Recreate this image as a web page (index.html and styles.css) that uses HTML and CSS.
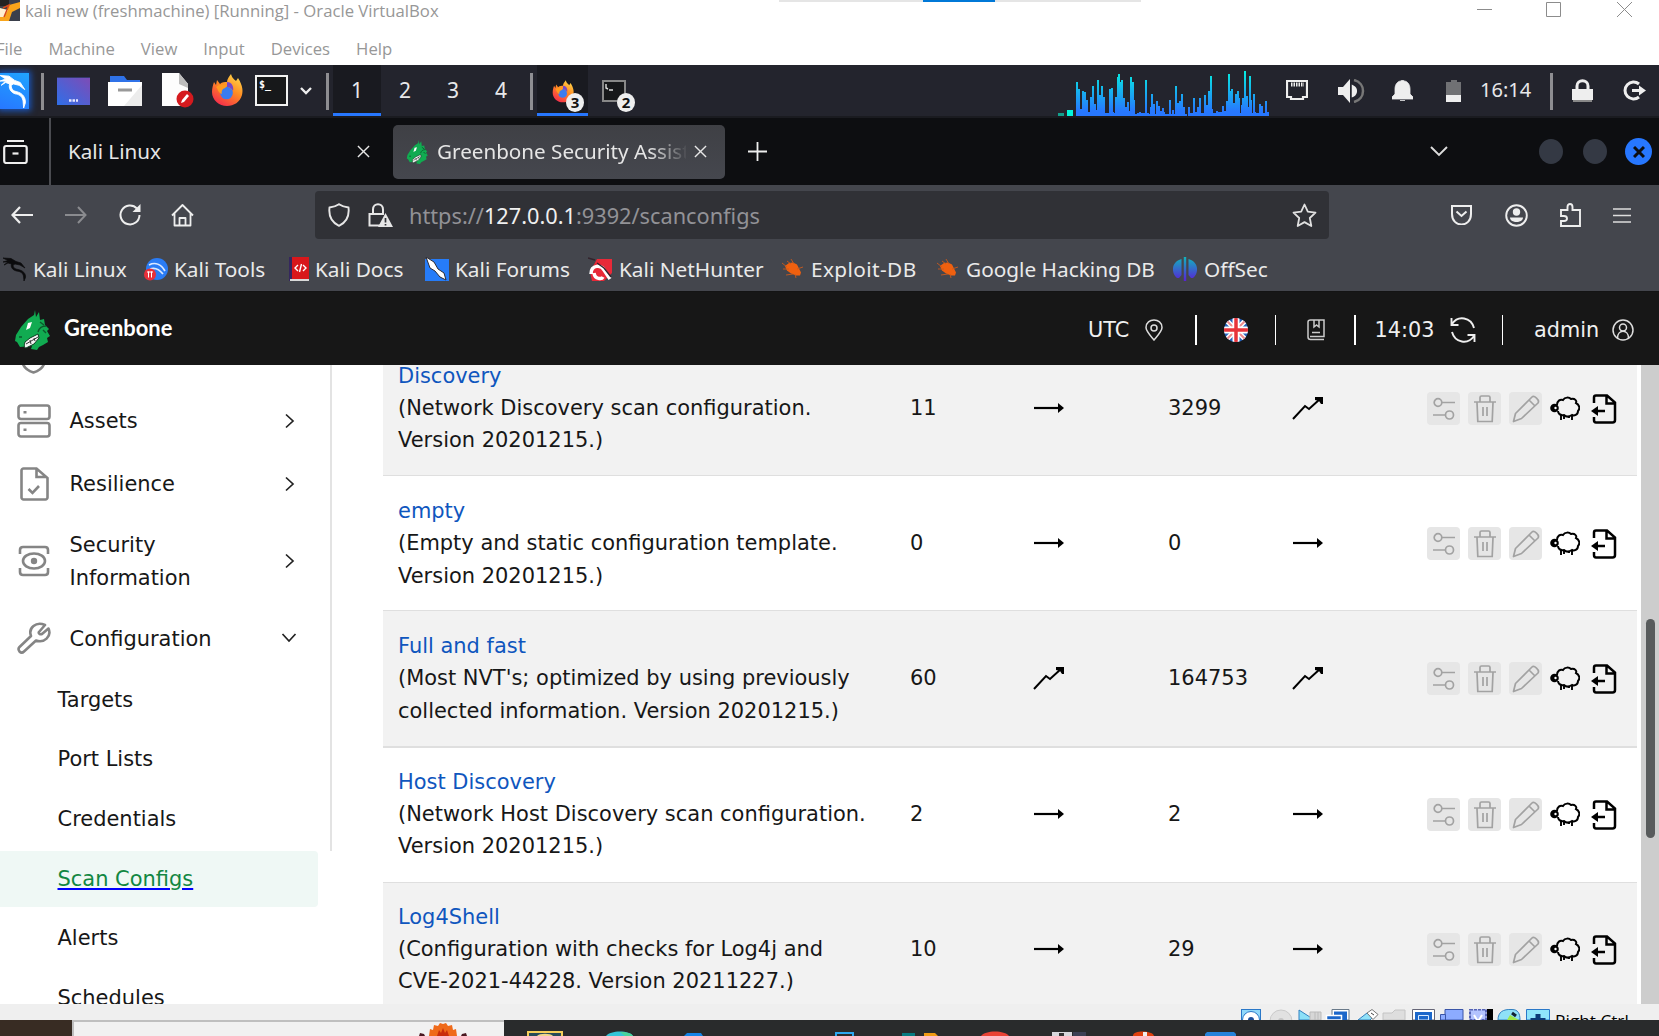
FILE: index.html
```html
<!DOCTYPE html>
<html lang="en">
<head>
<meta charset="utf-8">
<title>kali new (freshmachine) [Running] - Oracle VirtualBox</title>
<link rel="stylesheet" href="styles.css">
</head>
<body>
<svg class="defs" width="0" height="0">
  <defs>
    <linearGradient id="g-desk" x1="0" y1="1" x2="1" y2="0"><stop offset="0" stop-color="#2f6fe8"/><stop offset="1" stop-color="#7f4bb5"/></linearGradient>
    <linearGradient id="g-fox" x1=".8" y1="0" x2=".2" y2="1"><stop offset="0" stop-color="#ffd84a"/><stop offset=".45" stop-color="#ff8a22"/><stop offset="1" stop-color="#f4264f"/></linearGradient>
    <linearGradient id="g-cpu" gradientUnits="userSpaceOnUse" x1="0" y1="0" x2="0" y2="46"><stop offset="0" stop-color="#05f0dd"/><stop offset=".9" stop-color="#2777ff"/></linearGradient>
    <linearGradient id="g-off" gradientUnits="userSpaceOnUse" x1="0" y1="0" x2="0" y2="24"><stop offset="0" stop-color="#10b5bd"/><stop offset="1" stop-color="#5a1fd8"/></linearGradient>
  </defs>
  <symbol id="firefox" viewBox="0 0 32 34">
    <path d="M3 8l2 3 1-5 3 4c2-2 5-2 7-2 0-3 2-5 4-8 1 4 3 5 5 7l2-3c5 8 5 13 4 17-2 7-8 11-15 11C8 32 1 26 1 18c0-4 1-7 2-10z" fill="url(#g-fox)"/>
    <circle cx="15.5" cy="19" r="6.3" fill="#3a7cf0"/>
    <path d="M5 13c3-3 7-3 11-2-1 2-1 3-4 4-1 1-2 4-1 5-4-1-4-5-6-7z" fill="#ff9a20"/>
    <path d="M16 8c5 0 7 5 6 9-1-2-3-4-6-4z" fill="#7547c9"/>
  </symbol>
  <symbol id="dragon" viewBox="0 0 24 24">
    <path d="M0 1l8 .5 5 3 5 1.500 4 5-5-3-5-1-2 1c0 3 2 4 5 4.500 5 1 8 4 7.500 8L21 24l-.5-5c-1-4-4-4.500-7-5-4-1-6-4-5-7L5 6 1 8l4-3-5 0 5-1.500z" fill="currentColor" stroke="currentColor" stroke-width=".7" stroke-linejoin="round"/>
  </symbol>
  <symbol id="gb" viewBox="0 0 40 40">
    <path d="M23 0l1 7 3-5 1 8 4-1 1 6 4 4-2 2 3 5-3 2 1 4-5 3-4 2-2 3-6-1 1-3-12 1-3-5-2-1 1-6 5-8 7-8 6-4z" fill="#11ab51"/>
    <path d="M13 32l5-4 8-4 1 4-5 6-8 4c-2 0-2-3-1-6z" fill="#f4f4f4" stroke="#0b3d20" stroke-width="1"/>
    <path d="M14 34l12-7M18 30l1 4M22 28l1 3" stroke="#333" stroke-width="1"/>
    <path d="M16 13l4-1-2 6-4 2z" fill="#fff"/>
    <path d="M26 22c1-4 4-6 8-6M28 12l4 3M7 27h3M31 20l3 3" fill="none" stroke="#0b5a2c" stroke-width="1.4"/>
  </symbol>
  <symbol id="x" viewBox="0 0 14 14"><path d="M1 1l12 12M13 1L1 13" fill="none" stroke="currentColor" stroke-width="1.5"/></symbol>
  <symbol id="bug" viewBox="0 0 22 20">
    <path d="M3 7l4-3 4-.5 4 2 2 4 2 4-1 3-4 0-5-2-4-3z" fill="#f0600f"/>
    <path d="M0 4l5 4M1 10l6 0M4 16l7-1M9 0l3 5M14 19l-1-4M21 8l-6 2M5 2l4 3" stroke="#c95a1d" stroke-width=".9"/>
  </symbol>
  <symbol id="right" viewBox="0 0 32 20"><path d="M1 10h24" stroke="#000" stroke-width="2.200"/><path d="M25 5l6 5-6 5z" fill="#000"/></symbol>
  <symbol id="up" viewBox="0 0 32 24"><path d="M1 23l12-13 4 3L28 3" fill="none" stroke="#000" stroke-width="2"/><path d="M23 1h8v7h-2l-2-3-4-1z" fill="#000"/></symbol>
  <symbol id="conf" viewBox="0 0 24 26"><g fill="none" stroke="#a2a2a2" stroke-width="1.7"><circle cx="6" cy="6.500" r="3.800"/><path d="M10 6.500h13M1 19h12"/><circle cx="17.500" cy="19" r="4"/></g></symbol>
  <symbol id="trash" viewBox="0 0 24 28"><path d="M1 7h22M4 7.500l.8 19h14.400l.8-19M7 7V2.500c0-1 .5-1.500 1.500-1.500h7c1 0 1.500.5 1.500 1.500V7M10 12v9M14 12v9" fill="none" stroke="#a2a2a2" stroke-width="1.7"/></symbol>
  <symbol id="pen" viewBox="0 0 28 28"><path d="M1.500 26.500l2-8L20 2c2-2 8 3 6 6L9.500 23.500zM17 5l6 6" fill="none" stroke="#a2a2a2" stroke-width="1.700" stroke-linejoin="round"/></symbol>
  <symbol id="sheep" viewBox="0 0 30 26">
    <path d="M7 9C7 5 10 3 13 4c2-3 6-3 8-1 4-1 6 2 5 4 4 2 4 6 2 8 0 4-4 5-6 4-3 2-6 2-8 0-4 1-6-2-6-4" fill="none" stroke="#000" stroke-width="2"/>
    <path d="M11 19v5M14 20v3M22 19v5M19 20v2" stroke="#000" stroke-width="1.900"/>
    <circle cx="4.500" cy="12" r="4.300" fill="#000"/><circle cx="5.500" cy="12" r="1.200" fill="#fff"/>
  </symbol>
  <symbol id="export" viewBox="0 0 26 30"><path d="M3 9V3.500C3 2 4 1.500 5 1.500h11l8 7V26c0 1.500-1 2.500-2.500 2.500H5c-1.500 0-2-1-2-2.500v-3M15.500 2v7.500H24" fill="none" stroke="#000" stroke-width="2.500"/><path d="M5 17h9" stroke="#000" stroke-width="2.500"/><path d="M7 12v10l-7-5z" fill="#000"/></symbol>
  <symbol id="chev" viewBox="0 0 10 16"><path d="M1 1.500L8 8l-7 6.500" fill="none" stroke="#222" stroke-width="1.700"/></symbol>
</svg>

<header class="window">
  <div class="snapbar"><i></i></div>
  <div class="titlebar">
    <svg class="vbox" width="20" height="21" viewBox="0 0 20 21"><path d="M0 0h20v21H0z" fill="#3a3f4b"/><path d="M0 0h9v6H0z" fill="#222"/><path d="M20 2v6l-8 4-3 9H0v-5l5-1 4-10z" fill="#f9a51b"/><path d="M0 8l8 2-4 7H0z" fill="#fff0d0"/><path d="M3 8l6-3-5 12" fill="none" stroke="#d64a1a" stroke-width="1.500"/></svg>
    <span class="title">kali new (freshmachine) [Running] - Oracle VirtualBox</span>
    <svg class="winctl" width="156" height="17" viewBox="0 0 156 17"><path d="M0 9.500h15M69.500 2.500h14v14h-14zM140 2l15 15M155 2l-15 15" fill="none" stroke="#8c8c8c"/></svg>
  </div>
  <nav class="menubar"><span>File</span><span>Machine</span><span>View</span><span>Input</span><span>Devices</span><span>Help</span></nav>
</header>

<section class="panel">
  <div class="kali"><svg width="27" height="34" viewBox="0 0 24 24" preserveAspectRatio="none"><use href="#dragon"/></svg></div>
  <i class="sep"></i>
  <div class="launchers">
    <svg width="33" height="28" viewBox="0 0 33 28"><path d="M0 0h33v28H0z" fill="url(#g-desk)"/><path d="M0 0h33v1H0z" fill="#343a6b"/><path d="M12 23.500h9" stroke="#e8e8ff" stroke-width="2.500" stroke-dasharray="2.500 1"/></svg>
    <svg width="34" height="31" viewBox="0 0 34 31"><path d="M2 9V1h14l3 4h13v5z" fill="#2f72e8"/><path d="M0 7h34v24H0z" fill="#fff"/><path d="M34 10v21H16z" fill="#ececec"/><path d="M10 15h14" stroke="#999" stroke-width="3"/></svg>
    <svg width="32" height="35" viewBox="0 0 32 35"><path d="M0 0h17l9 11v22H0z" fill="#fdfdfd"/><path d="M17 0l9 11v4l-9-4z" fill="#bdbdbd"/><circle cx="23" cy="26" r="8.500" fill="#d51a1e"/><path d="M19 30l3-1 5-6-2-2-5 6z" fill="#fff"/></svg>
    <svg width="32" height="34"><use href="#firefox"/></svg>
    <svg width="33" height="31" viewBox="0 0 33 31"><path d="M1 1h31v29H1z" fill="#17181a" stroke="#f2f2f2" stroke-width="2"/><text x="4" y="13" class="term">$_</text></svg>
    <svg width="12" height="8" viewBox="0 0 12 8"><path d="M1 1l5 5 5-5" fill="none" stroke="#eee" stroke-width="2.300"/></svg>
  </div>
  <i class="sep"></i>
  <div class="spaces"><span class="on">1</span><span>2</span><span>3</span><span>4</span></div>
  <i class="sep"></i>
  <div class="task on"><svg width="22" height="24"><use href="#firefox"/></svg><b>3</b></div>
  <div class="task second"><svg width="24" height="22" viewBox="0 0 24 22"><path d="M1 1h22v20H1z" fill="#17181a" stroke="#888" stroke-width="2"/><path d="M4 4v4l2 1M7 10h4" fill="none" stroke="#ddd" stroke-width="1.400"/></svg><b>2</b></div>
  <svg class="cpu" width="211" height="46" viewBox="0 0 211 46"><path d="M0 43h6v3H0z" fill="#12a08d"/><path d="M9 40h6v6H9z" fill="#05f5dc"/><path id="cpu-bars" fill="url(#g-cpu)"/></svg>
  <div class="tray">
    <svg width="22" height="21" viewBox="0 0 22 21"><path d="M1 1h20v16h-4v2H5v-2H1z" fill="none" stroke="#eee" stroke-width="2.200"/><path d="M5 4.500h13" stroke="#eee" stroke-width="4" stroke-dasharray="1.500 1"/></svg>
    <svg width="27" height="24" viewBox="0 0 27 24"><path d="M0 8h5l7-8v24l-7-8H0z" fill="#eee"/><path d="M15 7.500a5 5 0 010 9z" fill="#eee" stroke="#eee" stroke-width="2.500"/><path d="M16 1c12 3 12 19 0 22" fill="none" stroke="#777" stroke-width="2.500"/></svg>
    <svg width="21" height="22" viewBox="0 0 21 22"><path d="M0 19v-2l3-3V9c0-5 3-8 6-8 0-1 3-1 3 0 3 0 6 3 6 8v5l3 3v2zM8 20.500h5" fill="#eee" stroke="#eee" stroke-width=".8"/></svg>
    <svg width="15" height="22" viewBox="0 0 15 22"><path d="M0 2h5V0h6v2h4v13H0z" fill="#707174"/><path d="M0 15h15v7H0z" fill="#eee"/></svg>
    <span class="clock">16:14</span>
    <i class="sep"></i>
    <svg width="21" height="24" viewBox="0 0 21 24"><path d="M5 11V7c0-7 11-7 11 0v4" fill="none" stroke="#eee" stroke-width="3"/><path d="M0 10h21v11H0z" fill="#eee"/><path d="M1 21h19v2H1z" fill="#888"/></svg>
    <svg width="23" height="21" viewBox="0 0 23 21"><path d="M16 4a8.500 8.500 0 100 13" fill="none" stroke="#eee" stroke-width="3"/><path d="M9 10.500h9" stroke="#eee" stroke-width="3"/><path d="M16 5.500l7 5-7 5z" fill="#eee"/></svg>
  </div>
</section>

<section class="tabs">
  <svg class="recent" width="25" height="24" viewBox="0 0 25 24"><path d="M4 1h17" stroke="#eee" stroke-width="2"/><rect x="1.200" y="6" width="22.500" height="17" rx="2" fill="none" stroke="#eee" stroke-width="2.200"/><path d="M9.500 13.500h6" stroke="#eee" stroke-width="2.200"/></svg>
  <div class="tab first"><span>Kali Linux</span><svg width="13" height="13"><use href="#x"/></svg></div>
  <div class="tab active"><svg width="24" height="24"><use href="#gb"/></svg><span class="fade">Greenbone Security Assistant</span><svg width="13" height="13"><use href="#x"/></svg></div>
  <svg class="plus" width="19" height="19" viewBox="0 0 19 19"><path d="M9.500 0v19M0 9.500h19" stroke="#eee" stroke-width="1.800"/></svg>
  <div class="tabend">
    <svg width="18" height="11" viewBox="0 0 18 11"><path d="M1 1l8 8 8-8" fill="none" stroke="#ddd" stroke-width="1.900"/></svg>
    <i class="dot"></i><i class="dot"></i>
    <i class="dot close"><svg width="12" height="12" viewBox="0 0 12 12"><path d="M1 1l10 10M11 1L1 11" stroke="#0d0e11" stroke-width="3"/></svg></i>
  </div>
</section>

<section class="toolbar">
  <div class="nav">
    <svg width="22" height="18" viewBox="0 0 22 18"><path d="M9 1L1.500 9 9 17M1.500 9H22" fill="none" stroke="#eee" stroke-width="2.200"/></svg>
    <svg width="22" height="18" viewBox="0 0 22 18"><path d="M13 1l7.500 8-7.500 8M20.500 9H0" fill="none" stroke="#8a8b8f" stroke-width="2"/></svg>
    <svg width="22" height="22" viewBox="0 0 22 22"><path d="M18 4.500A9.500 9.500 0 1020.500 11" fill="none" stroke="#eee" stroke-width="2"/><path d="M21.500 0v8h-8z" fill="#eee"/></svg>
    <svg width="23" height="23" viewBox="0 0 23 23"><path d="M3.500 9v12.500h16V9M1 11.500L11.500 1 22 11.500M8.500 21v-7h6v7" fill="none" stroke="#eee" stroke-width="1.800" stroke-linejoin="round"/></svg>
  </div>
  <div class="url">
    <svg width="22" height="24" viewBox="0 0 22 24"><path d="M11 1.200c3 2 6 2.800 9.500 3.300C21.500 13 18 19.500 11 22.800 4 19.500.5 13 1.500 4.500 5 4 8 3.200 11 1.200z" fill="none" stroke="#e6e6e6" stroke-width="1.900"/></svg>
    <svg width="25" height="24" viewBox="0 0 25 24"><path d="M5 11V6.500c0-7 10-7 10 0V11M14 22.500H1.500V11H16" fill="none" stroke="#e6e6e6" stroke-width="2"/><path d="M17.500 10L25 24H10z" fill="#e6e6e6"/><path d="M17.500 15v4.500M17.500 21v1.500" stroke="#303136" stroke-width="1.700"/></svg>
    <span class="addr">https://<em>127.0.0.1</em>:9392/scanconfigs</span>
    <svg width="25" height="25" viewBox="0 0 25 25"><path d="M12.500 1.500l3.300 7.200 7.700 1-5.700 5.300 1.500 8-6.800-3.900L5.700 23l1.500-8-5.700-5.300 7.700-1z" fill="none" stroke="#e0e0e0" stroke-width="1.800" stroke-linejoin="round"/></svg>
  </div>
  <div class="actions">
    <svg width="21" height="20" viewBox="0 0 21 20"><path d="M1 1h19v8c0 14-19 14-19 0z" fill="none" stroke="#eee" stroke-width="2"/><path d="M5.500 6.500l5 4.500 5-4.500" fill="none" stroke="#eee" stroke-width="2"/></svg>
    <svg width="23" height="23" viewBox="0 0 23 23"><circle cx="11.500" cy="11.500" r="10.300" fill="none" stroke="#eee" stroke-width="1.900"/><circle cx="11.500" cy="8" r="3.700" fill="#eee"/><path d="M5 13.500h13c0 6-13 6-13 0z" fill="#eee"/></svg>
    <svg width="21" height="24" viewBox="0 0 21 24"><path d="M1 10V7h6.500V4c0-4 5-4 5 0v3H20v16H1v-5h3c4 0 4-5 0-5H1z" fill="none" stroke="#eee" stroke-width="1.900"/></svg>
    <svg width="18" height="15" viewBox="0 0 18 15"><path d="M0 1h18M0 7.500h18M0 14h18" stroke="#ddd" stroke-width="1.500"/></svg>
  </div>
</section>

<section class="bookmarks">
  <span class="b1"><svg class="dk" width="24" height="24"><use href="#dragon"/></svg>Kali Linux</span>
  <span class="b2"><svg width="24" height="24" viewBox="0 0 24 24"><circle cx="13" cy="12" r="11" fill="#2a7cf5"/><path d="M5 8c6-3 12-1 16 6M6 12c5-2 9 0 13 5" fill="none" stroke="#dbe9ff" stroke-width="1.700"/><circle cx="6" cy="17.500" r="6" fill="#e8303a"/><path d="M4.500 14.500v6M7.500 14.500v6M3 15h6" stroke="#fff"/></svg>Kali Tools</span>
  <span class="b3"><svg width="20" height="24" viewBox="0 0 20 24"><path d="M0 0h4v24H0z" fill="#35275e"/><path d="M3 0h17v22H3z" fill="#d8171b"/><path d="M1 22h19v2H1z" fill="#d9d9d9"/><path d="M9 8l-3 3 3 3M14 8l3 3-3 3M12.500 7l-2 8" fill="none" stroke="#fff" stroke-width="1.400"/></svg>Kali Docs</span>
  <span class="b4"><svg width="24" height="24" viewBox="0 0 24 24"><path d="M0 2h24v22H0z" fill="#267cf8"/><path d="M1 0l8 5 4 7 6 4 2 7-6-3-5-6-5-3z" fill="#fff" stroke="#2c2c36" stroke-width="1"/></svg>Kali Forums</span>
  <span class="b5"><svg width="24" height="24" viewBox="0 0 24 24"><path d="M9 2h15v14l-8 8H4L2 15z" fill="#e82938"/><path d="M3 17c0-10 11-9 13-4l6 9M6 16c1 7 8 6 9 4" fill="none" stroke="#fff" stroke-width="3.500"/><path d="M0 1l7 2M9 6l7 5 7 9" fill="none" stroke="#33232c" stroke-width="1.400"/></svg>Kali NetHunter</span>
  <span class="b6"><svg width="22" height="20"><use href="#bug"/></svg>Exploit-DB</span>
  <span class="b7"><svg width="22" height="20"><use href="#bug"/></svg>Google Hacking DB</span>
  <span class="b8"><svg width="24" height="24" viewBox="0 0 24 24"><path d="M8.500 2C-2 5-2 16 4 21h2l2.500-3zM15.500 2C26 5 26 16 20 21h-2l-2.500-3zM10.800 0h2.400v24h-2.400z" fill="url(#g-off)"/></svg>OffSec</span>
</section>

<section class="gbhead">
  <svg width="40" height="40"><use href="#gb"/></svg><strong>Greenbone</strong>
  <div class="gbtools">
    <span class="utc">UTC</span>
    <svg width="18" height="22" viewBox="0 0 18 22"><path d="M9 21C4 15 1 12 1 8.500c0-10 16-10 16 0C17 12 14 15 9 21z" fill="none" stroke="#ddd" stroke-width="1.500"/><circle cx="9" cy="9" r="3" fill="none" stroke="#ddd" stroke-width="1.500"/></svg>
    <i></i>
    <svg width="24" height="24" viewBox="0 0 24 24"><clipPath id="fc"><circle cx="12" cy="12" r="12"/></clipPath><g clip-path="url(#fc)"><path d="M0 0h24v24H0z" fill="#2463bd"/><path d="M0 0l24 24M24 0L0 24" stroke="#fff" stroke-width="5"/><path d="M0 0l24 24M24 0L0 24" stroke="#ee8b8d" stroke-width="2"/><path d="M12 0v24M0 12h24" stroke="#fff" stroke-width="7"/><path d="M12 0v24M0 12h24" stroke="#e8333a" stroke-width="3.500"/></g></svg>
    <i></i>
    <svg width="18" height="22" viewBox="0 0 18 22"><path d="M3 17.500h14V1H3.500C2 1 1 2 1 3v15c0 1.500 1 2.500 2.500 2.500H17M7 1v7l2.500-2L12 8V1M5 13.500h8" fill="none" stroke="#ccc" stroke-width="1.500"/></svg>
    <i></i>
    <span class="time">14:03</span>
    <svg width="26" height="26" viewBox="0 0 26 26"><path d="M2 7c6-9 19-7 22 4M24 19C18 28 5 26 2 15M1.500 1v7h7M24.500 25v-7h-7" fill="none" stroke="#eee" stroke-width="1.900"/></svg>
    <i></i>
    <span class="admin">admin</span>
    <svg width="22" height="22" viewBox="0 0 22 22"><g fill="none" stroke="#ddd" stroke-width="1.500"><circle cx="11" cy="11" r="10"/><circle cx="11" cy="8.500" r="3.500"/><path d="M5.500 19c0-9 11-9 11 0"/></g></svg>
  </div>
</section>

<main class="body">
  <aside class="side">
    <div class="clip"><svg width="33" height="33" viewBox="0 0 33 33"><path d="M16.500 1.500l12 4v10c0 9-5 14-12 16-7-2-12-7-12-16v-10z" fill="none" stroke="#858585" stroke-width="2.600"/></svg></div>
    <div class="item"><svg width="34" height="34" viewBox="0 0 34 34"><g fill="none" stroke="#858585" stroke-width="2.600"><rect x="1.500" y="1.500" width="31" height="13.500" rx="2.500"/><rect x="1.500" y="19" width="31" height="13.500" rx="2.500"/></g><path d="M6.500 8.300h3M6.500 25.800h3" stroke="#858585" stroke-width="2.600"/></svg><span>Assets</span><svg class="ch" width="10" height="16"><use href="#chev"/></svg></div>
    <div class="item"><svg width="34" height="34" viewBox="0 0 34 34"><g fill="none" stroke="#858585" stroke-width="2.600"><path d="M19.500 1.500H6.500c-1 0-2 1-2 2v27c0 1 1 2 2 2h22c1 0 2-1 2-2V11zM19.500 1.500V10h10.500"/><path d="M11.500 22l4 4 6.500-7"/></g></svg><span>Resilience</span><svg class="ch" width="10" height="16"><use href="#chev"/></svg></div>
    <div class="item tall"><svg width="34" height="34" viewBox="0 0 34 34"><g fill="none" stroke="#858585" stroke-width="2.600"><path d="M3 10V6c0-2 1-3 3-3h22c2 0 3 1 3 3v4M3 24v4c0 2 1 3 3 3h22c2 0 3-1 3-3v-4"/><ellipse cx="17" cy="17" rx="11" ry="7.500"/></g><circle cx="17" cy="17" r="3.200" fill="#858585"/></svg><span>Security<br>Information</span><svg class="ch" width="10" height="16"><use href="#chev"/></svg></div>
    <div class="item"><svg width="34" height="34" viewBox="0 0 34 34"><path d="M22 11l6-7c-9-4-17 3-14 11L2.500 26c-2 2-1 3 0 4.500 1.500 1.500 3 1.500 4.500 0L19 19.500c8 3 16-4 12.500-12L25 13c-2 1-4-1-3-2z" fill="none" stroke="#858585" stroke-width="2.600" stroke-linejoin="round"/></svg><span>Configuration</span><svg class="ch down" width="10" height="16"><use href="#chev"/></svg></div>
    <a class="sub">Targets</a><a class="sub">Port Lists</a><a class="sub">Credentials</a><a class="sub cur"><u>Scan Configs</u></a><a class="sub">Alerts</a><a class="sub">Schedules</a>
  </aside>
  <div class="rule"></div>
  <div class="table">
    <div class="row"><div><a>Discovery</a><br>(Network Discovery scan configuration.<br>Version 20201215.)</div><span>11</span><svg width="32" height="20"><use href="#right"/></svg><span>3299</span><svg width="32" height="24"><use href="#up"/></svg><div class="acts"><b><svg width="24" height="26"><use href="#conf"/></svg></b><b><svg width="24" height="28"><use href="#trash"/></svg></b><b><svg width="28" height="28"><use href="#pen"/></svg></b><svg width="30" height="26"><use href="#sheep"/></svg><svg width="26" height="30"><use href="#export"/></svg></div></div>
    <div class="row"><div><a>empty</a><br>(Empty and static configuration template.<br>Version 20201215.)</div><span>0</span><svg width="32" height="20"><use href="#right"/></svg><span>0</span><svg width="32" height="20"><use href="#right"/></svg><div class="acts"><b><svg width="24" height="26"><use href="#conf"/></svg></b><b><svg width="24" height="28"><use href="#trash"/></svg></b><b><svg width="28" height="28"><use href="#pen"/></svg></b><svg width="30" height="26"><use href="#sheep"/></svg><svg width="26" height="30"><use href="#export"/></svg></div></div>
    <div class="row thick"><div><a>Full and fast</a><br>(Most NVT's; optimized by using previously<br>collected information. Version 20201215.)</div><span>60</span><svg width="32" height="24"><use href="#up"/></svg><span>164753</span><svg width="32" height="24"><use href="#up"/></svg><div class="acts"><b><svg width="24" height="26"><use href="#conf"/></svg></b><b><svg width="24" height="28"><use href="#trash"/></svg></b><b><svg width="28" height="28"><use href="#pen"/></svg></b><svg width="30" height="26"><use href="#sheep"/></svg><svg width="26" height="30"><use href="#export"/></svg></div></div>
    <div class="row after"><div><a>Host Discovery</a><br>(Network Host Discovery scan configuration.<br>Version 20201215.)</div><span>2</span><svg width="32" height="20"><use href="#right"/></svg><span>2</span><svg width="32" height="20"><use href="#right"/></svg><div class="acts"><b><svg width="24" height="26"><use href="#conf"/></svg></b><b><svg width="24" height="28"><use href="#trash"/></svg></b><b><svg width="28" height="28"><use href="#pen"/></svg></b><svg width="30" height="26"><use href="#sheep"/></svg><svg width="26" height="30"><use href="#export"/></svg></div></div>
    <div class="row after"><div><a>Log4Shell</a><br>(Configuration with checks for Log4j and<br>CVE-2021-44228. Version 20211227.)</div><span>10</span><svg width="32" height="20"><use href="#right"/></svg><span>29</span><svg width="32" height="20"><use href="#right"/></svg><div class="acts"><b><svg width="24" height="26"><use href="#conf"/></svg></b><b><svg width="24" height="28"><use href="#trash"/></svg></b><b><svg width="28" height="28"><use href="#pen"/></svg></b><svg width="30" height="26"><use href="#sheep"/></svg><svg width="26" height="30"><use href="#export"/></svg></div></div>
  </div>
  <div class="scroll"><i></i></div>
</main>

<footer class="status">
  <svg width="310" height="11" viewBox="0 0 310 11">
    <rect x=".5" y=".5" width="19" height="20" fill="#8fd8fa" stroke="#2a78c8"/><circle cx="10" cy="11" r="8.500" fill="#fff" stroke="#2a78c8"/><circle cx="10" cy="11" r="3" fill="#1d4f9a"/>
    <circle cx="40" cy="12" r="11" fill="#e1e1e1" stroke="#cacaca"/><circle cx="40" cy="12" r="3" fill="#c4c4c4"/>
    <path d="M58 1l14 9v1H58z" fill="#8be0f8" stroke="#3380c0"/><path d="M69 3h11v8H69z" fill="#d7d7d7" stroke="#bbb"/><path d="M74 3v8M77 3v8" stroke="#bbb"/>
    <path d="M91 .5h17V11H91z" fill="#fff" stroke="#6a7a8a"/><path d="M93 2.500h13V11H93z" fill="#1c67ca"/><path d="M85.500 6.500h15V11h-15z" fill="#1c67ca" stroke="#fff" stroke-width="1.500"/>
    <path d="M117 11l9-7 5 5-2 2z" fill="#8fe1f8" stroke="#3380c0"/><path d="M126 4l5-3.500 6 5-5 5z" fill="#fff" stroke="#777"/><path d="M130 4l3 2" stroke="#444"/>
    <path d="M142 4h9l3-3h10v10h-22z" fill="#dedede" stroke="#c4c4c4"/>
    <path d="M171.500.5h22V11h-22z" fill="#fff" stroke="#667"/><path d="M174 3h17v8h-17z" fill="#1c67ca"/><path d="M177.500 6.500h10V11h-10z" fill="#1c67ca" stroke="#d8eaff"/>
    <path d="M204 .5h18V11h-18z" fill="#8cabff" stroke="#3a55a8"/><path d="M199.500 5.500h5V11h-5z" fill="#8cabff" stroke="#3a55a8"/>
    <path d="M229 .5h16V11h-16z" fill="#b3c3ff" stroke="#5563b5" stroke-width="2" stroke-dasharray="3 1"/><path d="M233 6l3 5h2l3-5" fill="none" stroke="#fff" stroke-width="2"/><path d="M246 0h6v11h-6z" fill="#000"/>
    <path d="M257 11c0-8 5-11 14-10.500 6 0 8 4 8 10.500z" fill="#8fe1f8" stroke="#3380c0"/><path d="M266 11l3-5 9 5z" fill="#9ee84a"/><path d="M271 4l4 3" stroke="#123" stroke-width="3"/>
    <path d="M285.500.5h23V11h-23z" fill="#8fe5fb" stroke="#2a78c8"/><path d="M294.500 5h5v4h5v2h-15V9h5z" fill="#0c3a78"/>
  </svg>
  <span>Right Ctrl</span>
</footer>
<div class="taskbar">
  <div class="start"></div>
  <div class="search"><svg width="54" height="14" viewBox="0 0 54 14"><path d="M3 14l1-3 4 1 1 2zM51 14l-1-3-4 1-1 2z" fill="#4a1820"/><path d="M13 14l1-7 3 1 1-5 4 1 2-3 3 1 3-1 2 3 4-1 1 5 3-1 1 7z" fill="#ef6a1a"/><path d="M21 14l2-6 2 3 2-5 2 5 2-3 2 6z" fill="#c92e0c"/></svg></div>
  <svg class="apps" width="712" height="5" viewBox="0 0 712 5">
    <path d="M1 5V1h34v4" fill="#284b57" stroke="#f6cf5a" stroke-width="2"/><path d="M10 5c2-3 14-3 16 0z" fill="#f0d58c"/>
    <path d="M79 5c4-6 24-6 27 0z" fill="#35c6d8"/><path d="M93 1c7 0 11 1 13 4h-8z" fill="#4bd39a"/>
    <path d="M157 5l3-3h14l2 3z" fill="#1484e8"/>
    <path d="M309 5V2h17v3" fill="none" stroke="#2aa7f0" stroke-width="2"/>
    <path d="M375 2h13v3h-13z" fill="#087a80"/><path d="M397 2h11l3 3h-14z" fill="#f09a13"/>
    <path d="M454 5c4-6 24-6 28 0z" fill="#ea4335"/>
    <path d="M525 1h20v4h-20z" fill="#d7d7dc"/><path d="M532 2h5v3h-5z" fill="#333"/><path d="M546 1h13v4h-13z" fill="#3c4054"/>
    <path d="M606 5c-1-6 20-6 21 0z" fill="#e0410f"/><path d="M616 1h4v4h-4z" fill="#eee"/>
    <path d="M678 5V3l2-2h27l2 2v2z" fill="#2482da"/>
  </svg>
</div>
<script src="cpu.js"></script>
</body>
</html>
```
FILE: cpu.js
```js
// CPU load history: pairs of x offset and bar height, 46px tall graph.
const load = [18,34,20,27,22,7,24,25,26,24,28,16,30,4,32,19,34,30,36,12,38,6,39,36,41,21,43,30,45,19,47,3,49,3,51,27,53,28,54,4,57,19,59,39,60,42,62,34,63,36,65,18,67,9,69,14,70,5,72,39,74,34,75,16,77,1,79,3,81,4,83,3,85,3,87,36,89,3,92,9,93,22,95,12,98,15,100,10,102,5,104,8,105,4,111,16,114,6,117,30,119,13,121,15,123,22,125,9,130,9,132,3,135,18,137,4,139,9,141,18,143,3,146,21,148,11,150,25,152,40,153,7,156,3,158,5,160,4,162,4,164,10,166,5,168,15,170,42,172,25,173,27,175,13,177,22,179,25,180,18,183,11,184,18,186,45,188,20,189,9,191,40,192,16,195,22,196,4,201,12,203,10,205,3,207,15,209,4];
let d = 'M18 43h49v3H18zM68 44h61v2H68zM130 43h80v3h-80z';
for (let i = 0; i < load.length; i += 2) d += `M${load[i]} 46v-${load[i + 1]}h2v${load[i + 1]}z`;
document.getElementById('cpu-bars').setAttribute('d', d);
```
FILE: styles.css
```css
* { box-sizing: border-box; }
body { margin: 0; width: 1659px; height: 1036px; overflow: hidden; background: #fff; display: flex; flex-direction: column; font-family: "DejaVu Sans", sans-serif; color: #171717; }
svg { display: block; flex: none; }
.defs { position: absolute; }
i { font-style: normal; display: block; flex: none; }

.window { height: 65px; flex: none; position: relative; font-family: "Open Sans", sans-serif; font-size: 16.72px; color: #979797; }
.snapbar { position: absolute; left: 779px; top: 0; width: 362px; height: 2px; background: #e5e5e5; }
.snapbar i { width: 72px; height: 2px; margin-left: 144px; background: #0078d7; }
.titlebar { height: 21px; display: flex; align-items: center; }
.title { margin-left: 5px; line-height: 21px; white-space: nowrap; }
.winctl { margin-left: auto; margin-right: 26px; align-self: flex-start; }
.menubar { display: flex; height: 33px; margin-top: 11px; line-height: 33px; gap: 26px; margin-left: -4px; }

.panel { height: 53px; flex: none; background: #23242d; border-bottom: 2px solid #1a1b20; display: flex; align-items: center; overflow: hidden; font-family: "Noto Sans", sans-serif; }
.sep { width: 3px; height: 37px; background: #8e8e92; margin-top: 1px; }
.kali { width: 29px; height: 36px; margin-right: 12px; background: linear-gradient(200deg, #20a4ff, #2777ff); box-shadow: 0 0 6px 2px #1b54b8; color: #fff; padding-top: 1px; }
.launchers { display: flex; align-items: center; margin-left: 13px; }
.launchers svg:nth-child(2) { margin-left: 18px; }
.launchers svg:nth-child(3) { margin-left: 20px; }
.launchers svg:nth-child(4) { margin-left: 17px; }
.launchers svg:nth-child(5) { margin-left: 12px; }
.launchers svg:nth-child(6) { margin: 0 14px 0 12px; }
.term { font: bold 10px "DejaVu Sans Mono", monospace; fill: #fff; }
.spaces { display: flex; margin-left: 4px; margin-right: 5px; }
.spaces span { width: 48px; height: 51px; line-height: 50px; text-align: center; font-size: 21px; color: #e8e8ea; }
.on { background: #191a20; border-bottom: 3px solid #2777ff; }
.task { width: 51px; height: 51px; margin-left: 4px; position: relative; padding: 15px 0 0 15px; }
.task b { position: absolute; left: 29px; top: 28px; width: 18px; height: 19px; border-radius: 50%; background: #eee; color: #111; font-size: 15px; line-height: 19px; text-align: center; }
.second { margin-left: 0; padding-left: 14px; }
.second b { left: 29px; }
.cpu { margin-left: 419px; align-self: flex-end; }
.tray { display: flex; align-items: center; margin-left: 17px; }
.tray svg:nth-child(2) { margin-left: 30px; }
.tray svg:nth-child(3) { margin-left: 27px; }
.tray svg:nth-child(4) { margin-left: 33px; }
.clock { margin-left: 19px; width: 70px; font-size: 20px; line-height: 28px; padding-bottom: 1px; color: #e8e8ea; }
.tray .sep { margin-right: 19px; }
.tray svg:last-child { margin-left: 30px; }

.tabs { height: 67px; flex: none; background: #0d0e11; display: flex; align-items: center; font-family: "Noto Sans", sans-serif; font-size: 20.65px; color: #e6e6e6; }
.recent { margin: 0 21px 0 3px; }
.tab { display: flex; align-items: center; white-space: nowrap; }
.tab span { padding-bottom: 1px; }
.first { width: 344px; height: 67px; border-left: 2px solid #4a4b50; padding: 0 23px 0 17px; justify-content: space-between; }
.active { width: 332px; height: 54px; border-radius: 5px; background: linear-gradient(#3f4045, #45474e); padding: 0 18px 0 12px; gap: 8px; }
.active span { width: 249px; overflow: hidden; -webkit-mask-image: linear-gradient(90deg, #000 85%, transparent 101%); mask-image: linear-gradient(90deg, #000 85%, transparent 101%); }
.plus { margin-left: 23px; }
.tabend { margin-left: auto; display: flex; align-items: center; margin-right: 7px; }
.dot { width: 24px; height: 25px; border-radius: 50%; background: #343944; margin-left: 20px; }
.tabend svg + .dot { margin-left: 91px; }
.close { width: 27px; height: 27px; background: #2777ff; margin-left: 18px; display: grid; place-items: center; }

.toolbar { height: 60px; flex: none; background: #44464d; display: flex; align-items: center; padding-left: 11px; font-family: "Noto Sans", sans-serif; }
.nav { display: flex; align-items: center; width: 304px; gap: 32px; }
.nav svg:last-child { margin-left: -2px; }
.url { width: 1014px; height: 48px; border-radius: 4px; background: #303136; display: flex; align-items: center; padding: 0 12px 0 13px; }
.url svg:nth-child(2) { margin-left: 18px; }
.addr { flex: 1; margin-left: 16px; font-size: 21.74px; color: #929296; white-space: nowrap; }
.addr em { font-style: normal; color: #f0f0f0; }
.actions { display: flex; align-items: center; gap: 33px; margin-left: 122px; }
.actions svg:nth-child(n+3) { margin-left: -1px; }
.bookmarks { height: 47px; flex: none; background: #44464d; border-bottom: 1px solid #141414; display: flex; align-items: center; font-family: "Noto Sans", sans-serif; font-size: 20.8px; color: #eaeaea; white-space: nowrap; padding: 1px 0 0 3px; }
.bookmarks span { display: flex; align-items: center; gap: 6px; flex: none; }
.b1 { width: 141px; } .b2 { width: 145px; } .b3 { width: 136px; } .b4 { width: 163px; } .b5 { width: 194px; } .b6 { width: 155px; letter-spacing: .4px; } .b7 { width: 236px; }
.bookmarks .b5, .bookmarks .b6, .bookmarks .b7, .bookmarks .b8 { gap: 7px; }
.dk { color: #0b0b0d; }

.gbhead { height: 73px; flex: none; background: #171717; display: flex; align-items: center; padding: 2px 25px 0 12px; color: #f0f0f0; font-size: 20.8px; }
.gbhead strong { font: bold 21.9px Lato, sans-serif; margin: -5px 0 0 12px; color: #fff; }
.gbtools { margin-left: auto; display: flex; align-items: center; }
.gbtools i { width: 1.5px; height: 30px; background: #fff; }
.utc { width: 57px; }
.gbtools svg + i { margin-left: 32px; }
.gbtools i + svg { margin-left: 27px; }
.gbtools i:nth-of-type(2) { margin-left: 27px; }
.gbtools i:nth-of-type(2) + svg { margin-left: 31px; }
.gbtools i:nth-of-type(3) { margin-left: 29px; }
.gbtools i:nth-of-type(4) { margin-left: 26px; }
.time { margin-left: 19px; width: 75px; }
.admin { margin-left: 31px; width: 78px; }

.body { height: 639px; flex: none; display: flex; overflow: hidden; font-size: 20.96px; line-height: 32.3px; }
.side { width: 330px; }
.clip { height: 24px; overflow: hidden; padding-left: 16.500px; display: flex; align-items: flex-end; }
.clip svg { margin-bottom: 15px; }
.item { height: 63.2px; display: flex; align-items: center; padding: 0 35px 0 16.500px; }
.item span { margin-left: 19px; flex: 1; padding-top: 1px; }
.tall { height: 91.400px; }
.down { transform: rotate(90deg); margin-right: 1px; }
.sub { display: block; height: 59.5px; line-height: 61px; padding-left: 57.5px; }
.sub:last-child { line-height: 62px; }
.cur { height: 56px; line-height: 56px; width: 318px; margin: 2.5px 0 1px; background: #eff8f5; border-radius: 0 4px 4px 0; color: #128742; }
.cur u { text-decoration: underline #00f 2px; text-underline-offset: 2px; }
.rule { width: 2px; height: 486px; background: #e3e3e3; margin-right: 51px; }
.table { width: 1254px; margin-top: -24.4px; height: 700px; }
.row { height: 135.2px; border-bottom: 1.300px solid #dfdfdf; display: grid; grid-template-columns: 512px 123px 135px 124px 135px 1fr; align-items: center; padding: 1px 0 0 15px; }
.row:nth-child(odd) { background: #f2f2f2; }
.thick { height: 137px; border-bottom-width: 2px; }
.thick > * { margin-top: -1px; }
.after > * { margin-top: -3px; }
.row a { color: #0f56be; }
.row > div:first-child { white-space: nowrap; }
.acts { display: flex; align-items: center; padding-top: 1px; }
.acts b { width: 33px; height: 33px; margin-right: 8px; border-radius: 4px; background: #e6e6e6; display: grid; place-items: center; }
.acts > svg { margin-left: 0; }
.acts > svg + svg { margin-left: 11px; }
.scroll { width: 18px; margin-left: 4px; background: #cdcdcd; padding: 254px 0 0 5px; }
.scroll i { width: 9px; height: 219px; border-radius: 5px; background: #585b5c; }

.status { height: 16px; flex: none; overflow: hidden; background: #efefef; display: flex; padding: 5px 0 0 1241px; }
.status span { font: 17.2px/24px "Open Sans", sans-serif; margin: 0 0 0 4px; color: #000; white-space: nowrap; }
.taskbar { height: 16px; flex: none; background: #292b2c; display: flex; }
.start { width: 72px; background: #382c23; }
.search { width: 432px; background: #f1f1f1; border-top: 2px solid #bfbfbf; border-left: 2px solid #bfbfbf; padding-left: 342px; }
.apps { margin: 11px 0 0 23px; }
```
